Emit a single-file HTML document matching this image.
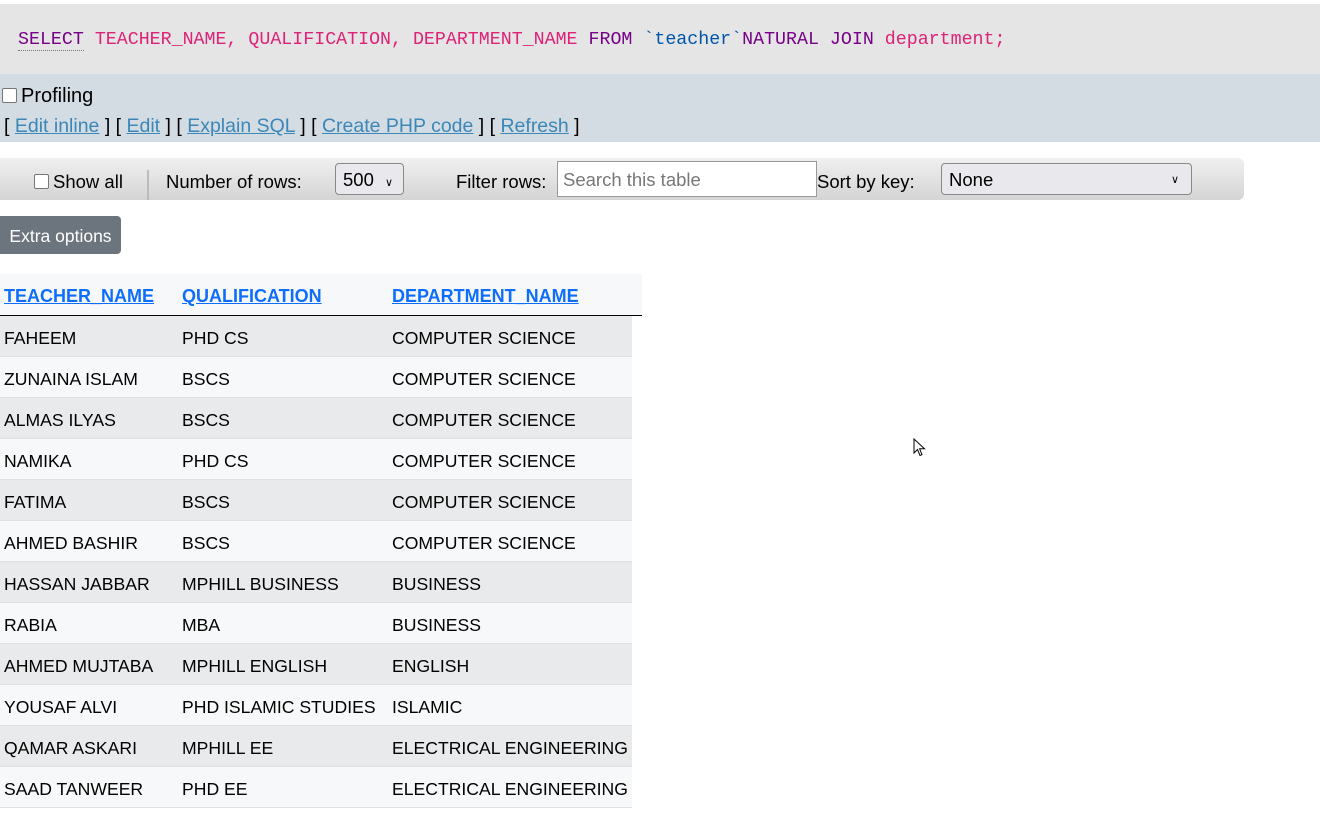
<!DOCTYPE html>
<html><head><meta charset="utf-8"><style>
body{margin:0;width:1320px;height:817px;background:#fff;font-family:"Liberation Sans",sans-serif;font-size:17.6px;color:#000;position:relative;overflow:hidden}
.a{position:absolute;white-space:nowrap}
.sql{left:0;top:4px;width:1320px;height:70px;background:#e5e5e5;font-family:"Liberation Mono",monospace;font-size:18.3px;line-height:72px;padding-left:18px;box-sizing:border-box}
.kw{color:#770088}.fld{color:#dd2277}.tb{color:#0055aa}
.bar{left:0;top:74px;width:1320px;height:68px;background:#d4dce3}
.lnk{text-decoration:underline;color:#3a87b8}
.cb{display:inline-block;width:13px;height:13px;border:1px solid #777;border-radius:2px;background:#fff;vertical-align:-1px;margin-right:4px}
.nav{left:0;top:158px;width:1244px;height:42px;border-radius:0 6px 6px 0;background:linear-gradient(#f0f0f0,#d4d4d4)}
.sel{border:1px solid #888;border-radius:4px;background:#e9e9ed;height:32px;box-sizing:border-box;line-height:32px;padding-left:7px}
.row{left:0;width:632px;height:40px;border-bottom:1px solid #dee2e6}
.c{position:absolute;top:12px}
.h{position:absolute;top:12px;text-decoration:underline}
</style></head><body>
<div class="a sql"><span class="kw" style="border-bottom:1px dotted #777">SELECT</span> <span class="fld">TEACHER_NAME, QUALIFICATION, DEPARTMENT_NAME</span> <span class="kw">FROM</span> <span class="tb">`teacher`</span><span class="kw">NATURAL JOIN</span> <span class="fld">department;</span></div>
<div class="a bar"></div>
<div class="a" style="left:2px;top:85px;font-size:20px"><span class="cb"></span>Profiling</div>
<div class="a" style="left:4px;top:115px;font-size:19.5px">[ <span class="lnk">Edit inline</span> ] [ <span class="lnk">Edit</span> ] [ <span class="lnk">Explain SQL</span> ] [ <span class="lnk">Create PHP code</span> ] [ <span class="lnk">Refresh</span> ]</div>
<div class="a nav"></div>
<div class="a" style="left:34px;top:171px;font-size:18.5px"><span class="cb"></span>Show all</div>
<div class="a" style="left:147px;top:170px;width:2px;height:30px;background:#bbb"></div>
<div class="a" style="left:166px;top:171px;font-size:18.5px">Number of rows:</div>
<div class="a sel" style="left:335px;top:163px;width:69px;font-size:18.5px">500 <span style="font-size:11px;margin-left:6px">&#8744;</span></div>
<div class="a" style="left:456px;top:171px;font-size:18.5px">Filter rows:</div>
<div class="a" style="left:557px;top:161px;width:260px;height:36px;box-sizing:border-box;border:1px solid #999;background:#fff;color:#777;font-size:18.5px;line-height:36px;padding-left:5px">Search this table</div>
<div class="a" style="left:817px;top:171px;font-size:18.5px">Sort by key:</div>
<div class="a sel" style="left:941px;top:163px;width:251px;font-size:18.5px">None<span style="position:absolute;right:12px;font-size:11px">&#8744;</span></div>
<div class="a" style="left:0;top:216px;width:121px;height:38px;background:#6c757d;border-radius:0 4px 4px 0;color:#fff;font-size:17.5px;line-height:41px;text-align:center">Extra options</div>
<div class="a" style="left:0;top:274px;width:642px;height:41px;background:#f7f8f9;border-bottom:1px solid #000;font-weight:bold;color:#0d6efd;font-size:18px">
<span class="h" style="left:4px;top:12px">TEACHER_NAME</span><span class="h" style="left:182px;top:12px">QUALIFICATION</span><span class="h" style="left:392px;top:12px">DEPARTMENT_NAME</span></div>
<div class="a row" style="top:316px;background:#e9eaeb"><span class="c" style="left:4px">FAHEEM</span><span class="c" style="left:182px">PHD CS</span><span class="c" style="left:392px">COMPUTER SCIENCE</span></div>
<div class="a row" style="top:357px;background:#f7f8f9"><span class="c" style="left:4px">ZUNAINA ISLAM</span><span class="c" style="left:182px">BSCS</span><span class="c" style="left:392px">COMPUTER SCIENCE</span></div>
<div class="a row" style="top:398px;background:#e9eaeb"><span class="c" style="left:4px">ALMAS ILYAS</span><span class="c" style="left:182px">BSCS</span><span class="c" style="left:392px">COMPUTER SCIENCE</span></div>
<div class="a row" style="top:439px;background:#f7f8f9"><span class="c" style="left:4px">NAMIKA</span><span class="c" style="left:182px">PHD CS</span><span class="c" style="left:392px">COMPUTER SCIENCE</span></div>
<div class="a row" style="top:480px;background:#e9eaeb"><span class="c" style="left:4px">FATIMA</span><span class="c" style="left:182px">BSCS</span><span class="c" style="left:392px">COMPUTER SCIENCE</span></div>
<div class="a row" style="top:521px;background:#f7f8f9"><span class="c" style="left:4px">AHMED BASHIR</span><span class="c" style="left:182px">BSCS</span><span class="c" style="left:392px">COMPUTER SCIENCE</span></div>
<div class="a row" style="top:562px;background:#e9eaeb"><span class="c" style="left:4px">HASSAN JABBAR</span><span class="c" style="left:182px">MPHILL BUSINESS</span><span class="c" style="left:392px">BUSINESS</span></div>
<div class="a row" style="top:603px;background:#f7f8f9"><span class="c" style="left:4px">RABIA</span><span class="c" style="left:182px">MBA</span><span class="c" style="left:392px">BUSINESS</span></div>
<div class="a row" style="top:644px;background:#e9eaeb"><span class="c" style="left:4px">AHMED MUJTABA</span><span class="c" style="left:182px">MPHILL ENGLISH</span><span class="c" style="left:392px">ENGLISH</span></div>
<div class="a row" style="top:685px;background:#f7f8f9"><span class="c" style="left:4px">YOUSAF ALVI</span><span class="c" style="left:182px">PHD ISLAMIC STUDIES</span><span class="c" style="left:392px">ISLAMIC</span></div>
<div class="a row" style="top:726px;background:#e9eaeb"><span class="c" style="left:4px">QAMAR ASKARI</span><span class="c" style="left:182px">MPHILL EE</span><span class="c" style="left:392px">ELECTRICAL ENGINEERING</span></div>
<div class="a row" style="top:767px;background:#f7f8f9"><span class="c" style="left:4px">SAAD TANWEER</span><span class="c" style="left:182px">PHD EE</span><span class="c" style="left:392px">ELECTRICAL ENGINEERING</span></div>
<svg class="a" style="left:913px;top:438px" width="14" height="20" viewBox="0 0 14 20"><path d="M1 1 L1 15 L4.5 11.5 L7 17.5 L9 16.6 L6.6 10.8 L11.5 10.8 Z" fill="#fff" stroke="#000" stroke-width="1"/></svg>
</body></html>
